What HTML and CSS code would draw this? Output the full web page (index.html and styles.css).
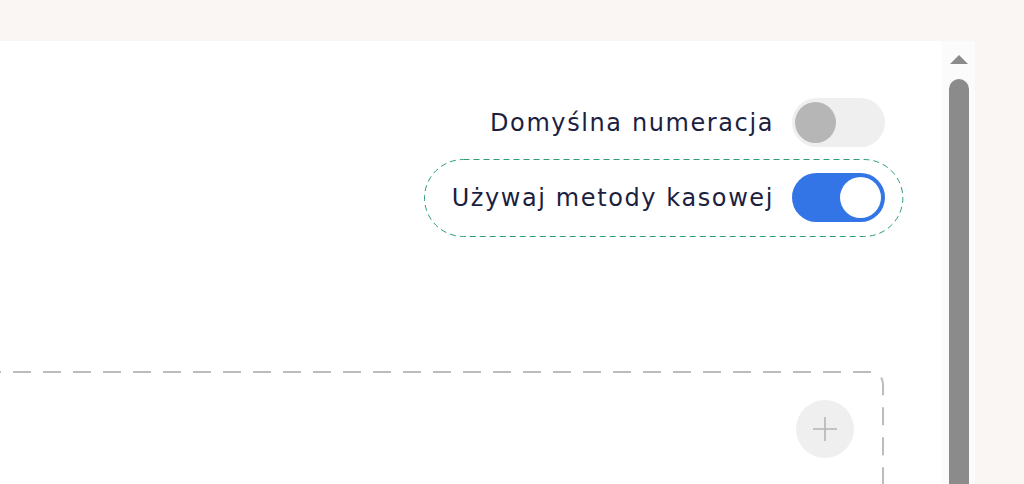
FILE: index.html
```html
<!DOCTYPE html>
<html lang="pl">

<head>
    <meta charset="UTF-8">
    <meta name="viewport" content="width=device-width, initial-scale=1.0">
    <title>Ustawienia dokumentu</title>
    <link rel="stylesheet" href="styles.css">
</head>

<body>
    <div class="page">
        <div class="panel">
            <div class="content">
                <div class="options">
                    <!-- Default numbering -->
                    <label class="option">
                        <span class="option-label">Domyślna numeracja</span>
                        <span class="switch"><span class="knob"></span></span>
                    </label>

                    <!-- Cash method (highlighted) -->
                    <label class="option option-highlight">
                        <svg class="highlight-border" aria-hidden="true"><rect rx="39" ry="39"></rect></svg>
                        <span class="option-label">Używaj metody kasowej</span>
                        <span class="switch switch-on"><span class="knob"></span></span>
                    </label>
                </div>

                <div class="dropzone">
                    <svg class="dropzone-border" aria-hidden="true"><rect rx="12" ry="12"></rect></svg>
                    <button class="add-btn" type="button" aria-label="Dodaj">
                        <svg width="26" height="26" viewBox="0 0 26 26">
                            <path d="M13 1v24M1 13h24" stroke="#b4b4b4" stroke-width="1.6" fill="none"/>
                        </svg>
                    </button>
                </div>
            </div>

            <div class="scrollbar">
                <span class="scroll-arrow"></span>
                <span class="scroll-thumb"></span>
            </div>
        </div>
    </div>
</body>
</html>
```

FILE: styles.css
```css
body {
    margin: 0;
    background: #f9f6f3;
    font-family: 'DejaVu Sans', 'Inter', sans-serif;
    color: #1c1f3f;
}

.page {
    height: 484px;
    padding-top: 41px;
    box-sizing: border-box;
    overflow: hidden;
}

.panel {
    display: flex;
    width: 1035px;
    height: 443px;
    margin-left: -60px; /* panel continues past the left edge */
    background: #fff;
}

.content {
    flex: 1;
    padding: 57px 39px 0 0;
}

.options {
    display: flex;
    flex-direction: column;
    align-items: flex-end;
    gap: 12px;
}

.option {
    display: flex;
    align-items: center;
    gap: 18px;
    padding-right: 18px;
    cursor: pointer;
}

.option-label {
    font-size: 24px;
    line-height: 1;
    letter-spacing: 1.6px;
}

.option-highlight {
    position: relative;
    padding: 14px 18px 15px 28px;
}

.highlight-border {
    position: absolute;
    inset: 0;
    width: 100%;
    height: 100%;
    overflow: visible;
}

.highlight-border rect {
    x: 0.5px;
    y: 0.5px;
    width: calc(100% - 1px);
    height: calc(100% - 1px);
    fill: none;
    stroke: #2ba06f;
    stroke-width: 1;
    stroke-dasharray: 6 4;
}

.switch {
    display: flex;
    align-items: center;
    width: 93px;
    height: 49px;
    padding: 0 3px;
    box-sizing: border-box;
    border-radius: 25px;
    background: #efefef;
}

.knob {
    width: 41px;
    height: 41px;
    border-radius: 50%;
    background: #b6b6b6;
}

.switch-on {
    justify-content: flex-end;
    padding: 0 4px;
    background: #3375e7;
}

.switch-on .knob {
    background: #fff;
}

.dropzone {
    position: relative;
    display: flex;
    justify-content: flex-end;
    height: 160px;
    margin: 134px 19px 0 0;
    padding: 29px 30px;
    box-sizing: border-box;
}

.dropzone-border {
    position: absolute;
    inset: 0;
    width: 100%;
    height: 100%;
}

.dropzone-border rect {
    x: 1px;
    y: 1px;
    width: calc(100% - 2px);
    height: calc(100% - 2px);
    fill: none;
    stroke: #bcbcbc;
    stroke-width: 2;
    stroke-dasharray: 18 12;
}

.add-btn {
    position: relative;
    display: flex;
    align-items: center;
    justify-content: center;
    width: 58px;
    height: 58px;
    padding: 0;
    border: none;
    border-radius: 50%;
    background: #efefef;
    cursor: pointer;
}

.scrollbar {
    display: flex;
    flex-direction: column;
    align-items: center;
    width: 33px;
    background: #fbfbfb;
}

.scroll-arrow {
    width: 0;
    height: 0;
    margin-top: 14px;
    border-left: 9px solid transparent;
    border-right: 9px solid transparent;
    border-bottom: 9px solid #8b8b8b;
}

.scroll-thumb {
    flex: 1;
    width: 20px;
    margin-top: 15px;
    border-radius: 10px 10px 0 0;
    background: #8b8b8b;
}
```
